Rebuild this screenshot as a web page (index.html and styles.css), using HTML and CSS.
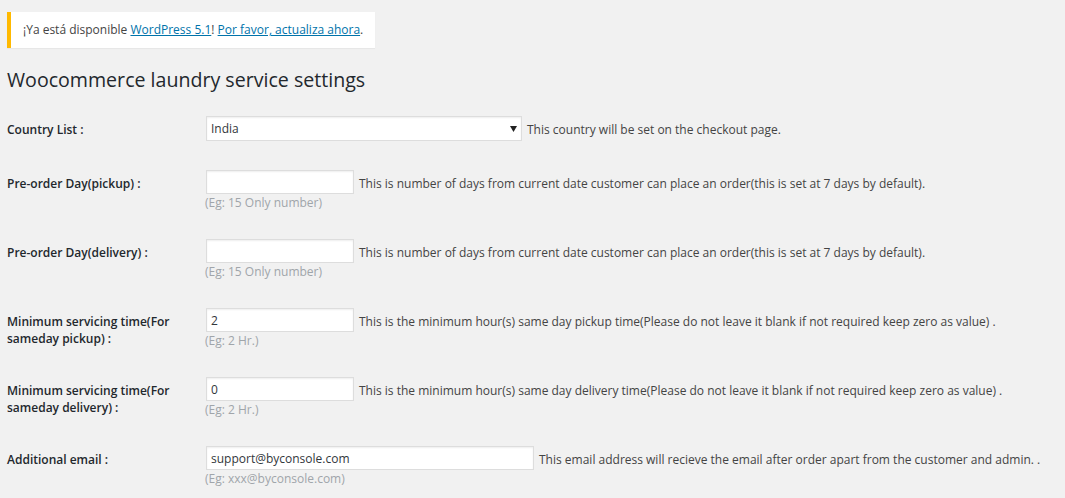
FILE: index.html
```html
<!DOCTYPE html>
<html lang="es">
<head>
    <meta charset="UTF-8">
    <meta name="viewport" content="width=device-width, initial-scale=1.0">
    <title>Woocommerce laundry service settings</title>
    <link rel="stylesheet" href="styles.css">
</head>
<body>

<div class="wrap">
    <div class="update-nag">
        <p>¡Ya está disponible <a href="#">WordPress 5.1</a>! <a href="#">Por favor, actualiza ahora</a>.</p>
    </div>

    <h1>Woocommerce laundry service settings</h1>

    <form class="settings-form" action="#" method="post">
        <div class="form-row">
            <label class="row-label" for="country">Country List :</label>
            <div class="row-field">
                <div class="field-line">
                    <div class="select-box">
                        <select id="country" name="country">
                            <option>India</option>
                        </select>
                        <svg class="select-arrow" width="7" height="6" viewBox="0 0 7 6"><path d="M0 0H7L3.5 6Z" fill="#222"/></svg>
                    </div>
                    <span class="description">This country will be set on the checkout page.</span>
                </div>
            </div>
        </div>

        <div class="form-row">
            <label class="row-label" for="pickup_days">Pre-order Day(pickup) :</label>
            <div class="row-field">
                <div class="field-line">
                    <input type="text" id="pickup_days" name="pickup_days" value="">
                    <span class="description">This is number of days from current date customer can place an order(this is set at 7 days by default).</span>
                </div>
                <div class="hint">(Eg: 15 Only number)</div>
            </div>
        </div>

        <div class="form-row">
            <label class="row-label" for="delivery_days">Pre-order Day(delivery) :</label>
            <div class="row-field">
                <div class="field-line">
                    <input type="text" id="delivery_days" name="delivery_days" value="">
                    <span class="description">This is number of days from current date customer can place an order(this is set at 7 days by default).</span>
                </div>
                <div class="hint">(Eg: 15 Only number)</div>
            </div>
        </div>

        <div class="form-row">
            <label class="row-label" for="pickup_hours">Minimum servicing time(For sameday pickup) :</label>
            <div class="row-field">
                <div class="field-line">
                    <input type="text" id="pickup_hours" name="pickup_hours" value="2">
                    <span class="description">This is the minimum hour(s) same day pickup time(Please do not leave it blank if not required keep zero as value) .</span>
                </div>
                <div class="hint">(Eg: 2 Hr.)</div>
            </div>
        </div>

        <div class="form-row">
            <label class="row-label" for="delivery_hours">Minimum servicing time(For sameday delivery) :</label>
            <div class="row-field">
                <div class="field-line">
                    <input type="text" id="delivery_hours" name="delivery_hours" value="0">
                    <span class="description">This is the minimum hour(s) same day delivery time(Please do not leave it blank if not required keep zero as value) .</span>
                </div>
                <div class="hint">(Eg: 2 Hr.)</div>
            </div>
        </div>

        <div class="form-row">
            <label class="row-label" for="extra_email">Additional email :</label>
            <div class="row-field">
                <div class="field-line">
                    <input type="email" id="extra_email" class="wide-input" name="extra_email" value="support@byconsole.com">
                    <span class="description">This email address will recieve the email after order apart from the customer and admin. .</span>
                </div>
                <div class="hint">(Eg: xxx@byconsole.com)</div>
            </div>
        </div>
    </form>
</div>

</body>
</html>
```

FILE: styles.css
```css
body,
html {
    margin: 0;
    background-color: #f1f1f1;
    color: #444;
    font-family: "Open Sans", Arial, sans-serif;
    font-size: 12px;
    line-height: 1.4;
}
.wrap {
    padding: 12px 0 0 7px;
}
.update-nag {
    display: inline-block;
    background-color: #fff;
    border-left: 4px solid #ffb900;
    box-shadow: 0 1px 1px rgba(0, 0, 0, 0.04);
    padding: 0 12px;
}
.update-nag p {
    margin: 8px 0;
    line-height: 20px;
    color: #444;
}
.update-nag a {
    color: #0073aa;
}
h1 {
    font-size: 19.6px;
    font-weight: 400;
    line-height: 29px;
    color: #23282d;
    margin: 17px 0 22px 0;
}
.form-row {
    display: flex;
    margin-bottom: 27px;
}
.form-row:first-child {
    margin-bottom: 29px;
}
.row-label {
    width: 199px;
    flex-shrink: 0;
    padding-top: 5px;
    padding-right: 20px;
    box-sizing: border-box;
    font-weight: 600;
    line-height: 17px;
    color: #23282d;
}
.field-line {
    display: flex;
    align-items: center;
}
.select-box {
    position: relative;
}
.select-box select {
    -webkit-appearance: none;
    appearance: none;
    display: block;
    width: 316px;
    height: 25px;
    margin: 0;
    padding: 0 4px;
    border: 1px solid #ddd;
    border-radius: 0;
    background-color: #fff;
    box-shadow: inset 0 1px 2px rgba(0, 0, 0, 0.07);
    font-family: inherit;
    font-size: 12px;
    color: #32373c;
}
.select-arrow {
    position: absolute;
    right: 5px;
    top: 10px;
    pointer-events: none;
}
.field-line input {
    width: 148px;
    height: 24px;
    margin: 0;
    padding: 0 4px;
    box-sizing: border-box;
    border: 1px solid #ddd;
    background-color: #fff;
    box-shadow: inset 0 1px 2px rgba(0, 0, 0, 0.07);
    font-family: inherit;
    font-size: 12px;
    color: #32373c;
}
.field-line input.wide-input {
    width: 328px;
}
.description {
    margin-left: 5px;
    padding-top: 4px;
    color: #444;
}
.hint {
    margin-left: -1px;
    line-height: 18px;
    color: #a0a5aa;
}
```
